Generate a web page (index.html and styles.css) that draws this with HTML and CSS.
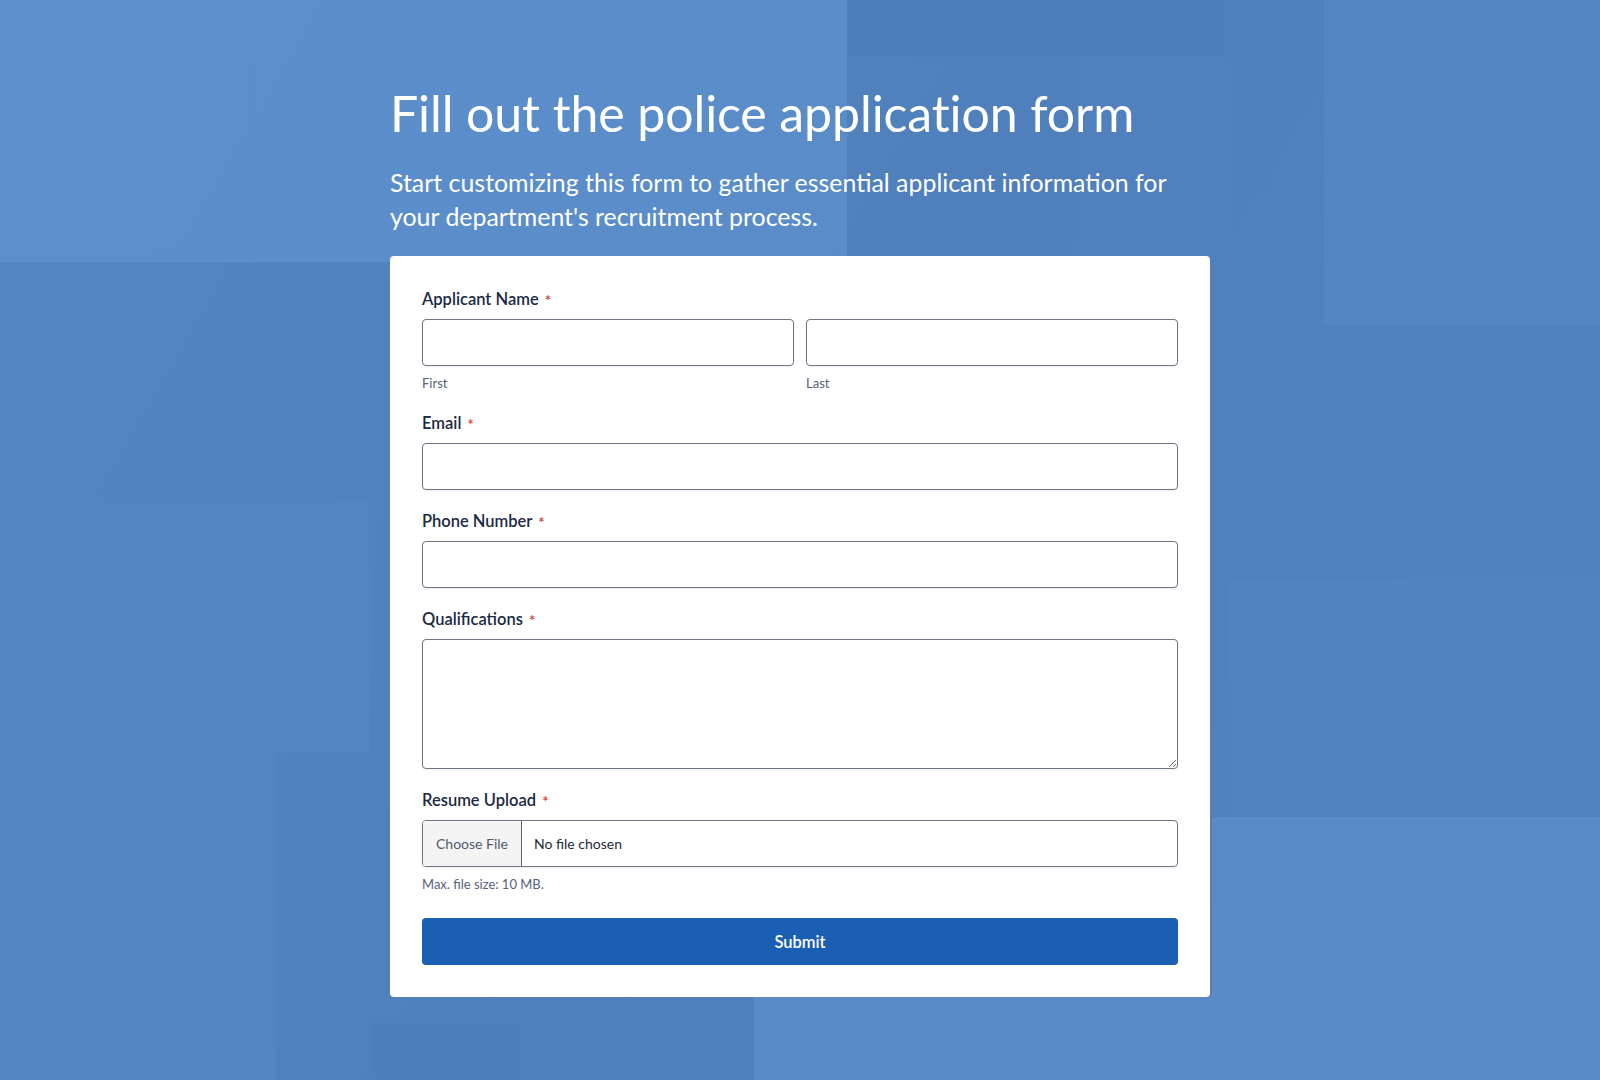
FILE: index.html
```html
<!DOCTYPE html>
<html lang="en">
<head>
<meta charset="utf-8">
<title>Police Application Form</title>
<link rel="stylesheet" href="styles.css">
</head>
<body>
<div class="bg" aria-hidden="true">
  <div class="shape s1"></div>
  <div class="shape s2"></div>
  <div class="shape s3"></div>
  <div class="shape s4"></div>
  <div class="shape s5"></div>
  <div class="shape s6"></div>
  <div class="shape s7"></div>
  <div class="shape s8"></div>
  <div class="shape s9"></div>
  <div class="shape s10"></div>
</div>
<main class="page">
  <h1 class="title">Fill out the police application form</h1>
  <p class="subtitle">Start customizing this form to gather essential applicant information for your department's recruitment process.</p>
  <form class="card">
    <div class="field">
      <label class="label">Applicant Name <span class="req">*</span></label>
      <div class="name-row">
        <div class="name-col">
          <input class="input" type="text">
          <span class="sublabel">First</span>
        </div>
        <div class="name-col">
          <input class="input" type="text">
          <span class="sublabel">Last</span>
        </div>
      </div>
    </div>
    <div class="field">
      <label class="label">Email <span class="req">*</span></label>
      <input class="input" type="email">
    </div>
    <div class="field">
      <label class="label">Phone Number <span class="req">*</span></label>
      <input class="input" type="tel">
    </div>
    <div class="field">
      <label class="label">Qualifications <span class="req">*</span></label>
      <textarea class="input textarea"></textarea>
    </div>
    <div class="field">
      <label class="label">Resume Upload <span class="req">*</span></label>
      <div class="file">
        <span class="file-btn">Choose File</span>
        <span class="file-name">No file chosen</span>
      </div>
      <span class="hint">Max. file size: 10 MB.</span>
    </div>
    <button class="submit" type="button">Submit</button>
  </form>
</main>
</body>
</html>
```
FILE: styles.css
```css
* { box-sizing: border-box; }
html, body { margin: 0; padding: 0; }
body {
  width: 1600px;
  min-height: 1080px;
  background: linear-gradient(120deg, #5386c2 0%, #4f80bc 50%, #5283bf 100%);
  font-family: Lato, "Open Sans", sans-serif;
  position: relative;
  overflow: hidden;
}
.bg { position: absolute; inset: 0; z-index: 0; }
.shape { position: absolute; }
.s1 { left: 0; top: 0; width: 847px; height: 262px; background: linear-gradient(120deg, #5b8ecb, #5a8dc8); }
.s2 { left: 847px; top: 0; width: 383px; height: 57px; background: #4d7fba; }
.s3 { left: 1075px; top: 57px; width: 155px; height: 200px; background: #5081be; }
.s4 { left: 1324px; top: 0; width: 276px; height: 326px; background: #5386c2; }
.s5 { left: 0; top: 500px; width: 370px; height: 253px; background: #5284c0; }
.s6 { left: 0; top: 753px; width: 276px; height: 327px; background: #5385c1; }
.s7 { left: 1230px; top: 580px; width: 370px; height: 237px; background: #5183bf; }
.s8 { left: 1212px; top: 817px; width: 388px; height: 263px; background: #5a8bc6; }
.s9 { left: 754px; top: 996px; width: 458px; height: 84px; background: #5a8bc6; }
.s10 { left: 370px; top: 1022px; width: 155px; height: 58px; background: #4d7fba; }

.page {
  position: relative;
  z-index: 1;
  width: 820px;
  margin: 0 auto;
  padding-top: 85px;
  padding-bottom: 84px;
}
.title {
  margin: 0;
  font-size: 50px;
  line-height: 56px;
  font-weight: 400;
  color: #ffffff;
  letter-spacing: -0.1px;
}
.subtitle {
  margin: 24px 0 0;
  max-width: 800px;
  font-size: 24.9px;
  line-height: 34px;
  font-weight: 400;
  color: #ffffff;
}
.card {
  margin-top: 23px;
  background: #ffffff;
  border-radius: 4px;
  padding: 32px 32px 32px;
  display: flex;
  flex-direction: column;
  gap: 20px;
}
.field { display: flex; flex-direction: column; }
.label {
  display: block;
  height: 22px;
  font-size: 16.5px;
  line-height: 22px;
  font-weight: 600;
  color: #1b2943;
  margin-bottom: 9px;
}
.req { color: #d0382c; font-size: 15px; line-height: 0; margin-left: 2px; vertical-align: -1px; }
.name-row { display: flex; gap: 12px; }
.name-col { flex: 1; display: flex; flex-direction: column; }
.input {
  display: block;
  width: 100%;
  height: 47px;
  border: 1px solid #6e7586;
  border-radius: 4px;
  background: #ffffff;
  box-shadow: 0 1px 2px rgba(30, 40, 60, 0.08);
  font-family: inherit;
  font-size: 15px;
  padding: 0 12px;
}
.textarea { height: 130px; resize: vertical; padding: 10px 12px; }
.sublabel {
  margin-top: 8px;
  font-size: 13px;
  line-height: 18px;
  color: #56617a;
}
.file {
  display: flex;
  height: 47px;
  border: 1px solid #6e7586;
  border-radius: 4px;
  overflow: hidden;
  box-shadow: 0 1px 2px rgba(30, 40, 60, 0.08);
}
.file-btn {
  width: 99px;
  background: #f4f4f5;
  border-right: 1px solid #5c6270;
  display: flex;
  align-items: center;
  justify-content: center;
  font-size: 14px;
  color: #525b6b;
}
.file-name {
  display: flex;
  align-items: center;
  padding-left: 12px;
  font-size: 14px;
  color: #1f2937;
}
.hint {
  margin-top: 8px;
  font-size: 13px;
  line-height: 18px;
  color: #56617a;
}
.submit {
  margin-top: 5px;
  height: 47px;
  border: none;
  border-radius: 4px;
  background: #1a5fb4;
  color: #ffffff;
  font-family: inherit;
  font-size: 16.5px;
  font-weight: 600;
}
```
